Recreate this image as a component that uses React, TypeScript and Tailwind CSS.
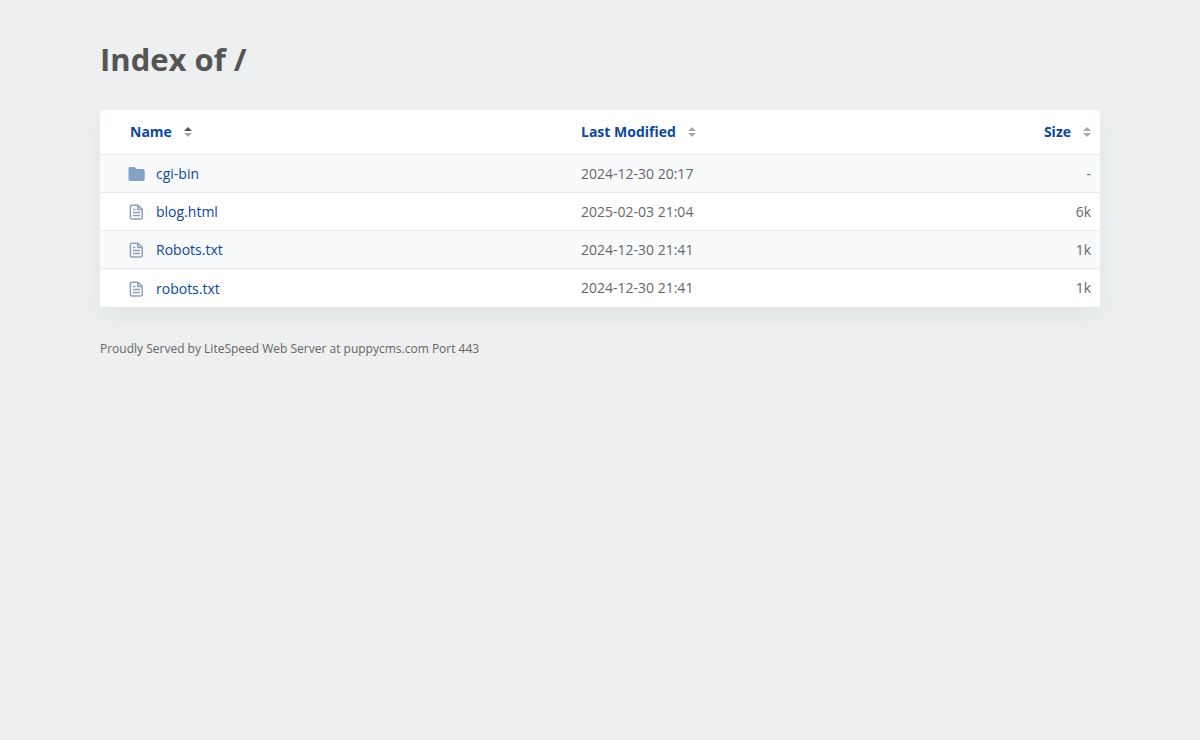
import React from 'react';

const files = [
  { name: 'cgi-bin', modified: '2024-12-30 20:17', size: '-', folder: true },
  { name: 'blog.html', modified: '2025-02-03 21:04', size: '6k', folder: false },
  { name: 'Robots.txt', modified: '2024-12-30 21:41', size: '1k', folder: false },
  { name: 'robots.txt', modified: '2024-12-30 21:41', size: '1k', folder: false },
];

const FolderIcon = () => (
  <svg width="18" height="18" viewBox="0 0 18 18" fill="#84a1c8" aria-hidden="true">
    <path d="M2 2h4c.6 0 1 .2 1.400.6L8.700 4h6.300a1.700 1.700 0 0 1 1.700 1.700v8.600a1.700 1.700 0 0 1-1.700 1.700H2.200A1.700 1.700 0 0 1 .5 14.300V3.500C.5 2.700 1.200 2 2 2Z" />
  </svg>
);

const FileIcon = () => (
  <svg width="18" height="18" viewBox="0 0 18 18" fill="none" stroke="#8ba0bf" strokeWidth="1.5" strokeLinejoin="round" aria-hidden="true">
    <path d="M3.800 2.200h6.200l4.200 4.200v8.100c0 .8-.6 1.400-1.400 1.400h-9c-.8 0-1.400-.6-1.400-1.400V3.600c0-.8.6-1.400 1.400-1.400Z" />
    <path d="M9.700 2.400v4.200H14M5 6.500h2.500M5 9.500h7M5 12.500h7" />
  </svg>
);

const SortIcon = ({ active }: { active?: boolean }) => (
  <svg width="8" height="10" viewBox="0 0 8 10" aria-hidden="true">
    <path d="M4 0 8 4H0Z" fill={active ? '#555555' : '#aaaaaa'} />
    <path d="M0 6h8l-4 4Z" fill="#aaaaaa" />
  </svg>
);

const SortButton = ({ label, active }: { label: string; active?: boolean }) => (
  <button type="button" className="inline-flex items-center gap-3 font-bold text-[#0b479c] cursor-pointer">
    {label}
    <SortIcon active={active} />
  </button>
);

const App = () => {
  return (
    <div className="min-h-screen bg-[#edeff0] font-['Open_Sans',sans-serif] text-sm text-[#666666]">
      <main className="max-w-[1000px] mx-auto pt-9">
        <h1 className="text-[31px] leading-[46px] font-bold text-[#555555]">Index of /</h1>
        <table className="w-full mt-7 table-fixed border-separate border-spacing-0 bg-white shadow-[0_8px_20px_rgba(40,80,70,0.06)]">
          <thead>
            <tr className="h-[45px]">
              <th scope="col" aria-sort="ascending" className="w-[47%] pl-[30px] text-left border-b border-[#e8ecef]">
                <SortButton label="Name" active />
              </th>
              <th scope="col" className="pl-[11px] text-left border-b border-[#e8ecef]">
                <SortButton label="Last Modified" />
              </th>
              <th scope="col" className="w-[14%] pr-[9px] text-right border-b border-[#e8ecef]">
                <SortButton label="Size" />
              </th>
            </tr>
          </thead>
          <tbody>
            {files.map((file) => (
              <tr key={file.name} className="group h-[38px] odd:bg-[#f9fafc]">
                <td className="pl-7 border-b border-[#e8ecef] group-last:border-b-0">
                  <a href={file.name} className="inline-flex items-center gap-[10px] align-middle text-[#0b479c]">
                    {file.folder ? <FolderIcon /> : <FileIcon />}
                    {file.name}
                  </a>
                </td>
                <td className="pl-[11px] border-b border-[#e8ecef] group-last:border-b-0">{file.modified}</td>
                <td className="pr-[9px] text-right border-b border-[#e8ecef] group-last:border-b-0">{file.size}</td>
              </tr>
            ))}
          </tbody>
        </table>
        <footer className="mt-8 text-xs leading-5">
          Proudly Served by LiteSpeed Web Server at puppycms.com Port 443
        </footer>
      </main>
    </div>
  );
};

export default App;
